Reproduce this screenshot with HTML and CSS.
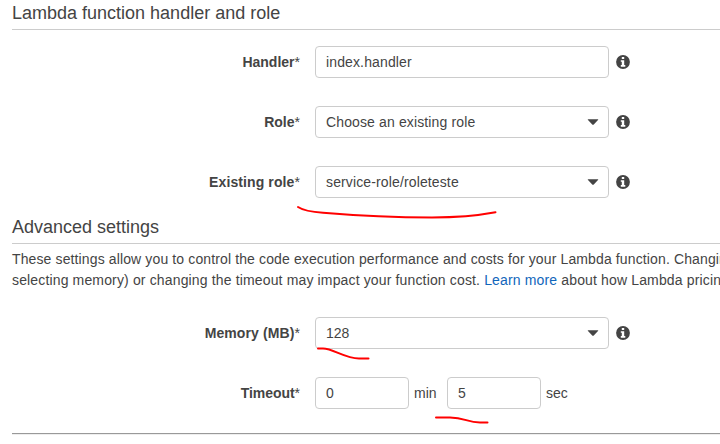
FILE: index.html
```html
<!DOCTYPE html>
<html lang="en">
<head>
<meta charset="utf-8">
<title>Lambda function configuration</title>
<link rel="stylesheet" href="styles.css">
</head>
<body>
<svg class="defs" width="0" height="0" aria-hidden="true">
  <symbol id="info" viewBox="0 0 14 14">
    <circle cx="7" cy="7" r="6.9" fill="#444"/>
    <path fill="#fff" d="M5.8 2.1h2.4v2H5.8zM4.8 5.2h3.4v4.9h1.1v1.6H4.8v-1.6h1V6.7h-1z"/>
  </symbol>
  <symbol id="caret" viewBox="0 0 12 6">
    <path fill="#444" d="M1.3 .3h9.4q1 0 .3.8L6.8 5.4q-.8.8-1.6 0L1 1.1Q.3.3 1.3.3z"/>
  </symbol>
</svg>
<main class="page">
  <h2 class="title">Lambda function handler and role</h2>
  <section class="fields">
    <div class="row">
      <label class="label">Handler<span>*</span></label>
      <div class="control"><span class="value">index.handler</span></div>
      <svg class="info"><use href="#info"/></svg>
    </div>
    <div class="row">
      <label class="label">Role<span>*</span></label>
      <div class="control"><span class="value">Choose an existing role</span><svg class="caret"><use href="#caret"/></svg></div>
      <svg class="info"><use href="#info"/></svg>
    </div>
    <div class="row">
      <label class="label wide">Existing role<span>*</span></label>
      <div class="control"><span class="value">service-role/roleteste</span><svg class="caret"><use href="#caret"/></svg></div>
      <svg class="info"><use href="#info"/></svg>
    </div>
  </section>
  <h2 class="title second">Advanced settings</h2>
  <p class="description"><span class="line one">These settings allow you to control the code execution performance and costs for your Lambda function. Changing</span><span class="line two">selecting memory) or changing the timeout may impact your function cost. <a>Learn more</a> about how Lambda pricing</span></p>
  <section class="fields advanced">
    <div class="row">
      <label class="label wide">Memory (MB)<span>*</span></label>
      <div class="control">128<svg class="caret"><use href="#caret"/></svg></div>
      <svg class="info"><use href="#info"/></svg>
    </div>
    <div class="row">
      <label class="label timeout">Timeout<span>*</span></label>
      <div class="control small">0</div>
      <span class="unit min">min</span>
      <div class="control small">5</div>
      <span class="unit">sec</span>
    </div>
  </section>
  <svg class="marks" viewBox="0 0 720 444" aria-hidden="true">
    <path d="M298 207C304 211 311 212 323 212.7C350 215 390 217.5 432 217.5C461 217.5 481 215 495.5 212.3"/>
    <path d="M318 348.5H323C333 348.5 345 358.5 359 358.5H368.5"/>
    <path d="M436 417.5H450C465 417.5 467 422.5 480 422.5H487.5"/>
  </svg>
</main>
</body>
</html>
```
FILE: styles.css
```css
* { box-sizing: border-box; }
body {
  margin: 0;
  background: #fff;
  color: #444;
  font: 14px/20px "Liberation Sans", Arial, sans-serif;
}
.defs { position: absolute; }
.page {
  position: relative;
  width: 720px;
  height: 444px;
  overflow: hidden;
  padding-left: 12px;
}
.title {
  height: 30px;
  margin: 0;
  padding-top: 3px;
  border-bottom: 1px solid #ccc;
  font-size: 18px;
  font-weight: 400;
  line-height: 20px;
}
.fields {
  display: flex;
  flex-direction: column;
  gap: 28px;
  padding-top: 16px;
}
.row { display: flex; align-items: center; height: 32px; }
.label {
  width: 288px;
  margin-right: 15px;
  text-align: right;
  font-weight: 700;
}
.label span { font-weight: 400; }
.wide { letter-spacing: 0.1px; }
.timeout { letter-spacing: -0.05px; }
.control {
  display: flex;
  align-items: center;
  justify-content: space-between;
  width: 294px;
  height: 32px;
  padding: 0 9px 0 10px;
  border: 1px solid #ccc;
  border-radius: 4px;
}
.value { letter-spacing: 0.13px; }
.small { width: 94px; }
.caret { width: 12px; height: 6px; }
.info { width: 14px; height: 14px; margin-left: 7px; }
.unit { margin-left: 5px; }
.min { width: 33px; }
.second { margin-top: 16px; }
.description { margin: 0; padding-top: 5px; }
.line { display: block; height: 21px; line-height: 21px; white-space: nowrap; }
.one { letter-spacing: 0.125px; }
.two { letter-spacing: 0.147px; }
.description a { color: #1166bb; }
.advanced {
  height: 133px;
  margin-top: 10px;
  padding-top: 16px;
  border-bottom: 1px solid #999;
  box-shadow: 0 1px #eee;
}
.marks {
  position: absolute;
  inset: 0;
  width: 720px;
  height: 444px;
  fill: none;
  stroke: #f00;
  stroke-width: 2;
  stroke-linecap: round;
}
```
